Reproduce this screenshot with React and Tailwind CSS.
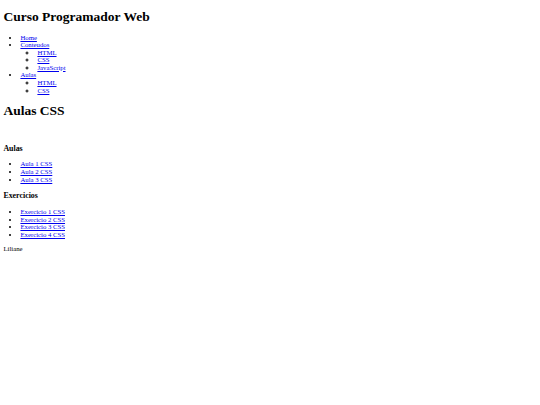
const link = 'text-[#0000ee] underline';

function Item({ children, sub }) {
  return (
    <li>
      <a href="#" className={link}>{children}</a>
      {sub && (
        <ul className="list-[circle] pl-[17px]">
          {sub.map((s) => (
            <li key={s}><a href="#" className={link}>{s}</a></li>
          ))}
        </ul>
      )}
    </li>
  );
}

export default function App() {
  return (
    <div className="min-h-[405px] bg-white text-black px-[3.4px] py-[0.1px] text-[6.75px] leading-[7.57px] font-[Liberation_Serif]">
      <h1 className="text-[13.5px] leading-[15.5px] font-bold my-[9px]">Curso Programador Web</h1>
      <ul className="list-disc pl-[17px] my-[6.75px]">
        <Item>Home</Item>
        <Item sub={['HTML', 'CSS', 'JavaScript']}>Conteudos</Item>
        <Item sub={['HTML', 'CSS']}>Aulas</Item>
      </ul>
      <h1 className="text-[13.5px] leading-[15.5px] font-bold mt-[9px] mb-[25px]">Aulas CSS</h1>
      <h3 className="text-[7.9px] leading-[9px] font-bold my-[7.9px]">Aulas</h3>
      <ul className="list-disc pl-[17px] my-[6.75px]">
        <Item>Aula 1 CSS</Item>
        <Item>Aula 2 CSS</Item>
        <Item>Aula 3 CSS</Item>
      </ul>
      <h3 className="text-[7.9px] leading-[9px] font-bold my-[7.9px]">Exercicios</h3>
      <ul className="list-disc pl-[17px] my-[6.75px]">
        <Item>Exercicio 1 CSS</Item>
        <Item>Exercicio 2 CSS</Item>
        <Item>Exercicio 3 CSS</Item>
        <Item>Exercicio 4 CSS</Item>
      </ul>
      <p className="my-[6.75px]">Liliane</p>
    </div>
  );
}
